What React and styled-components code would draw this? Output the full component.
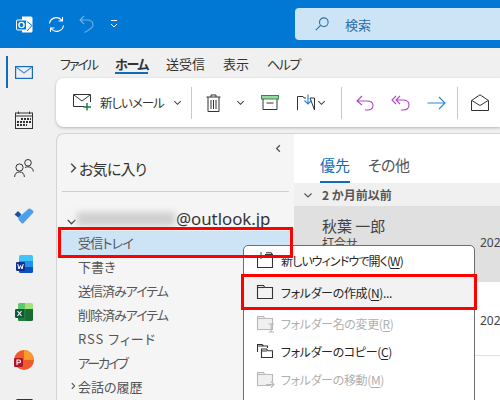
import React from 'react';
import styled, { createGlobalStyle } from 'styled-components';

const Global = createGlobalStyle`
  html, body { margin: 0; padding: 0; }
  body {
    width: 500px;
    height: 400px;
    overflow: hidden;
    font-family: "Noto Sans CJK JP", "Noto Sans", sans-serif;
    font-feature-settings: "palt";
    color: #333;
  }
`;

const Page = styled.div`
  position: relative;
  width: 500px;
  height: 400px;
  overflow: hidden;
  background: #f0f0f0;
  display: flex;
  flex-direction: column;
`;

const TitleBar = styled.div`
  height: 48px;
  flex: none;
  background: #0078d4;
  display: flex;
  align-items: center;
  padding-left: 16px;
`;

const TitleIcon = styled.div`
  display: flex;
  margin-right: ${props => props.gap}px;
`;

const SearchBox = styled.div`
  margin-left: auto;
  width: 205px;
  height: 32px;
  background: #cce4f6;
  border-radius: 4px 0 0 4px;
  display: flex;
  align-items: center;
  padding-left: 20px;
  box-sizing: border-box;
  gap: 16px;
  color: #2a6ea8;
  font-size: 13px;
`;

const Body = styled.div`
  flex: 1;
  display: flex;
  min-height: 0;
`;

const Rail = styled.div`
  width: 56px;
  flex: none;
  display: flex;
  flex-direction: column;
`;

const RailItem = styled.div`
  position: relative;
  width: 48px;
  height: 48px;
  flex: none;
  display: flex;
  align-items: center;
  justify-content: center;

  ${props => props.active && `
    &::before {
      content: '';
      position: absolute;
      left: 6px;
      top: 8px;
      width: 2px;
      height: 32px;
      background: #0f6cbd;
    }
  `}
`;

const Main = styled.div`
  flex: 1;
  min-width: 0;
  display: flex;
  flex-direction: column;
`;

const MenuBar = styled.div`
  height: 30px;
  flex: none;
  display: flex;
  align-items: center;
  padding: 0 0 0 4px;
  box-sizing: border-box;
  gap: 18px;
  font-size: 13px;
`;

const MenuTab = styled.div`
  position: relative;
  color: #333;
  line-height: 17px;
  letter-spacing: ${props => props.spacing || 0}px;
  font-weight: ${props => props.active ? 700 : 400};

  ${props => props.active && `
    &::after {
      content: '';
      position: absolute;
      left: 0;
      right: 0;
      bottom: -2px;
      height: 2px;
      background: #0f6cbd;
    }
  `}
`;

const Ribbon = styled.div`
  height: 49px;
  flex: none;
  background: #fff;
  border-radius: 8px 0 0 8px;
  box-shadow: 0 1px 3px rgba(0, 0, 0, 0.25);
  display: flex;
  align-items: center;
  padding-left: 17px;
  box-sizing: border-box;
`;

const RibbonLabel = styled.span`
  font-size: 12.5px;
  letter-spacing: -1px;
  color: #333;
  width: 73px;
  margin-left: 8px;
  white-space: nowrap;
`;

const RibbonIcon = styled.div`
  display: flex;
  flex: none;
  margin-left: ${props => props.left || 0}px;
`;

const Divider = styled.div`
  width: 1px;
  height: 32px;
  flex: none;
  background: #c8c8c8;
  margin-left: ${props => props.left || 0}px;
`;

const Panes = styled.div`
  flex: 1;
  display: flex;
  margin-top: 6px;
  min-height: 0;
`;

const FolderPane = styled.div`
  position: relative;
  width: 238px;
  flex: none;
  background: #f5f5f5;
  border: 1px solid #d4d4d4;
  border-right: none;
  border-bottom: none;
  border-radius: 8px 0 0 0;
  box-sizing: border-box;
  padding: 0 4px;
`;

const CollapseBtn = styled.div`
  position: absolute;
  right: 11px;
  top: 10px;
  display: flex;
`;

const Favorites = styled.div`
  height: 58px;
  margin: 0 1px;
  box-sizing: border-box;
  border-bottom: 1px solid #d0d0d0;
  display: flex;
  align-items: center;
  padding: 11px 0 0 5px;
  font-size: 15px;
  letter-spacing: -0.8px;
`;

const Account = styled.div`
  height: 39px;
  display: flex;
  align-items: flex-end;
  padding: 0 0 1px 5px;
  box-sizing: border-box;
  font-size: 16.8px;
  line-height: 22px;
  color: #333;
  font-family: "Noto Sans", sans-serif;
`;

const AccountArrow = styled.span`
  display: flex;
  margin-bottom: 3px;
`;

const Blurred = styled.div`
  width: 98px;
  height: 14px;
  margin: 0 1px 4px 0;
  background: #cfcfcf;
  filter: blur(3px);
`;

const FolderRow = styled.div`
  height: 24px;
  box-sizing: border-box;
  display: flex;
  align-items: center;
  padding-left: ${props => props.arrow ? '8px' : '17px'};
  padding-bottom: 2px;
  gap: 1px;
  font-size: 13px;
  letter-spacing: ${props => props.spacing || 0}px;
  color: #555;
  background: ${props => props.selected ? '#cce4f6' : 'transparent'};
`;

const MessagePane = styled.div`
  flex: 1;
  min-width: 0;
  background: #fff;
  border-top: 1px solid #d4d4d4;
  display: flex;
  flex-direction: column;
`;

const Tabs = styled.div`
  height: 49px;
  flex: none;
  display: flex;
  align-items: flex-end;
  gap: 18px;
  padding-left: 26px;
  font-size: 15px;
  box-sizing: border-box;
`;

const Tab = styled.div`
  height: 32px;
  line-height: 28px;
  box-sizing: border-box;
  letter-spacing: ${props => props.spacing || 0}px;
  color: ${props => props.active ? '#0f6cbd' : '#555'};
  border-bottom: ${props => props.active ? '2px solid #0f6cbd' : 'none'};
`;

const GroupHeader = styled.div`
  height: 23px;
  flex: none;
  background: #f0f0f0;
  display: flex;
  align-items: center;
  gap: 9px;
  padding-left: 9px;
  font-size: 12px;
  font-weight: 700;
  color: #555;
`;

const Message = styled.div`
  position: relative;
  height: ${props => props.height}px;
  flex: none;
  box-sizing: border-box;
  background: ${props => props.selected ? '#e0e0e0' : '#fff'};
  border-bottom: ${props => props.selected ? 'none' : '1px solid #e0e0e0'};
  padding: 10px 0 0 28px;
  color: #444;
`;

const Sender = styled.div`
  font-size: 15px;
  line-height: 20px;
`;

const Subject = styled.div`
  font-size: 12px;
  line-height: 14px;
`;

const MessageDate = styled.div`
  position: absolute;
  left: 186px;
  top: ${props => props.top}px;
  font-size: 12px;
  line-height: 16px;
  font-family: "Noto Sans", sans-serif;
`;

const ContextMenu = styled.div`
  position: absolute;
  left: 243px;
  top: 245px;
  width: 232px;
  height: 180px;
  box-sizing: border-box;
  background: #fff;
  border: 1px solid #6e6e6e;
  border-radius: 5px;
  display: flex;
  flex-direction: column;
`;

const MenuItem = styled.div`
  height: ${props => props.height || 28}px;
  flex: none;
  margin-top: ${props => props.top || 0}px;
  display: flex;
  align-items: center;
  gap: 8px;
  padding-left: 13px;
  font-size: 12px;
  letter-spacing: ${props => props.spacing ?? -0.35}px;
  color: ${props => props.disabled ? '#b0b0b0' : '#262626'};
  background: ${props => props.hot ? '#f2f2f2' : 'transparent'};
  white-space: nowrap;

  u { text-underline-offset: 2px; }
`;

const Highlight = styled.div`
  position: absolute;
  left: ${props => props.x}px;
  top: ${props => props.y}px;
  width: ${props => props.w}px;
  height: ${props => props.h}px;
  box-sizing: border-box;
  border: 3px solid #f00;
  pointer-events: none;
`;

const Chevron = ({ dir = 'right', size = 10, color = '#444', width = 1.2 }) => {
  const d = {
    right: 'M3.5 1.5 L7 5 L3.5 8.5',
    left: 'M6.5 1.5 L3 5 L6.5 8.5',
    down: 'M1.5 3.5 L5 7 L8.5 3.5',
  }[dir];
  return (
    <svg width={size} height={size} viewBox="0 0 10 10" fill="none" stroke={color} strokeWidth={width}>
      <path d={d} />
    </svg>
  );
};

const MailIcon = () => (
  <svg width="18" height="13" viewBox="0 0 18 13" fill="none">
    <rect x="0.6" y="0.6" width="16.8" height="11.8" stroke="#1a6bb5" strokeWidth="1.2" />
    <path d="M1 1 L9 7 L17 1" stroke="#4a94d4" strokeWidth="1.2" />
  </svg>
);

const CalendarIcon = () => (
  <svg width="18" height="18" viewBox="0 0 18 18" fill="none" stroke="#333" strokeWidth="1">
    <rect x="0.5" y="2" width="17" height="15.5" />
    <path d="M0.5 5 H17.5 M3.5 0.5 V3 M14.5 0.5 V3" />
    <path d="M6 8 H16 M2 11 H16 M2 14 H12" strokeWidth="2" strokeDasharray="2 1" />
  </svg>
);

const PeopleIcon = () => (
  <svg width="20" height="18" viewBox="0 0 20 18" fill="none" stroke="#333" strokeWidth="1">
    <circle cx="5.5" cy="8.5" r="3.6" />
    <path d="M0.6 18 C0.8 14.5 2.5 13 5.5 13 C8.5 13 10.2 14.5 10.4 18" />
    <circle cx="14" cy="3.8" r="3.3" />
    <path d="M11 8.5 C12 8 13 7.8 14 7.8 C17 7.8 19 9.5 19.4 12.5" />
  </svg>
);

const TodoIcon = () => (
  <svg width="20" height="16" viewBox="0 0 20 16">
    <path d="M0.5 6.5 L3.5 3.5 Q4 3 4.5 3.5 L7.5 6.5 L4.5 9.8 Z" fill="#1b4fa8" />
    <path d="M4.5 9.8 L14.5 0.8 Q15.5 0 16.5 0.8 L19.3 3 Q20 3.8 19.2 4.8 L9.6 15 Q8.5 16 7.4 15 L4.5 11.5 Z" fill="#4aa0ec" />
  </svg>
);

const WordIcon = () => (
  <svg width="17" height="18" viewBox="0 0 17 18">
    <path d="M4.5 0 H15.5 Q17 0 17 1.5 V6 H3 V1.5 Q3 0 4.5 0 Z" fill="#41c4f7" />
    <rect x="3" y="6" width="14" height="6" fill="#2590e6" />
    <path d="M3 12 H17 V16.5 Q17 18 15.5 18 H4.5 Q3 18 3 16.5 Z" fill="#0f50c4" />
    <rect x="0" y="7" width="9" height="9" rx="1.2" fill="#10318c" />
    <path d="M1.8 9 L3 14 L4.5 10.5 L6 14 L7.2 9" stroke="#fff" strokeWidth="1" fill="none" />
  </svg>
);

const ExcelIcon = () => (
  <svg width="18" height="18" viewBox="0 0 18 18">
    <path d="M4.5 0 H10.5 V6 H3 V1.5 Q3 0 4.5 0 Z" fill="#5cc96f" />
    <path d="M10.5 0 H16.5 Q18 0 18 1.5 V6 H10.5 Z" fill="#a8e07a" />
    <rect x="3" y="6" width="8" height="12" rx="1" fill="#21803f" />
    <path d="M10.5 6 H18 V16.5 Q18 18 16.5 18 H10.5 Z" fill="#1a6b32" />
    <rect x="0" y="6" width="9" height="9" rx="1.2" fill="#0d5a3b" />
    <path d="M2.5 8 L6.5 13 M6.5 8 L2.5 13" stroke="#fff" strokeWidth="1.1" />
  </svg>
);

const PowerPointIcon = () => (
  <svg width="20" height="20" viewBox="0 0 20 20">
    <circle cx="10" cy="10" r="10" fill="#ef5a2c" />
    <path d="M10 0 A10 10 0 0 1 20 10 L10 10 Z" fill="#fb9a2a" />
    <rect x="0" y="8" width="9" height="9" rx="1.2" fill="#b5132b" />
    <path d="M3 15 V10 H5 Q6.5 10 6.5 11.4 Q6.5 12.8 5 12.8 H3" stroke="#fff" strokeWidth="1.1" fill="none" />
  </svg>
);

const NextAppIcon = () => (
  <svg width="17" height="18" viewBox="0 0 17 18">
    <rect width="17" height="18" rx="1.5" fill="#333" />
  </svg>
);

const FolderIcon = ({ color = '#333', children, fill = 'none' }) => (
  <svg width="16" height="14" viewBox="0 0 16 14" fill={fill} stroke={color} strokeWidth="1.1" overflow="visible">
    <path d="M0.5 13.5 V0.5 H6.5 L8 2.5 H15.5 V13.5 Z" />
    <path d="M0.5 2.5 H7.5" />
    {children}
  </svg>
);

export default function App() {
  return (
    <Page>
      <Global />
      <TitleBar>
        <TitleIcon gap={15}>
          <svg width="17" height="17" viewBox="0 0 17 17">
            <path d="M6 0.5 H15 Q16.5 0.5 16.5 2 V15 Q16.5 16.5 15 16.5 H6 V13 H1 V4 H6 Z" fill="#fff" />
            <rect x="0.5" y="4" width="10" height="10" rx="1" fill="#0078d4" stroke="#fff" strokeWidth="1" />
            <circle cx="5.5" cy="9" r="2.6" fill="none" stroke="#fff" strokeWidth="1.4" />
            <path d="M11 5.5 L16 9.5 M11 15 L16 9.5" stroke="#0078d4" strokeWidth="1" />
          </svg>
        </TitleIcon>
        <TitleIcon gap={14}>
          <svg width="17" height="17" viewBox="0 0 17 17" fill="none" stroke="#fff" strokeWidth="1.1">
            <path d="M1.5 7.5 A7 7 0 0 1 14 4.5 M14.5 1 V5 H10.5" />
            <path d="M15.5 9.5 A7 7 0 0 1 3 12.5 M2.5 16 V12 H6.5" />
          </svg>
        </TitleIcon>
        <TitleIcon gap={16}>
          <svg width="15" height="18" viewBox="0 0 15 18" fill="none" stroke="#6fb0e6" strokeWidth="1.1">
            <path d="M5 1 L1 5 L5 9 M1 5 H8 Q14 5 14 10 Q14 13 5.5 17.5" />
          </svg>
        </TitleIcon>
        <TitleIcon gap={0}>
          <svg width="8" height="10" viewBox="0 0 8 10" fill="none" stroke="#fff" strokeWidth="1">
            <path d="M1 1.5 H7 M1 5 L4 8 L7 5" />
          </svg>
        </TitleIcon>
        <SearchBox>
          <svg width="14" height="14" viewBox="0 0 14 14" fill="none" stroke="#2a6ea8" strokeWidth="1.1">
            <circle cx="8.8" cy="5.2" r="4.3" />
            <path d="M5.6 8.4 L0.8 13.2" />
          </svg>
          検索
        </SearchBox>
      </TitleBar>
      <Body>
        <Rail>
          <RailItem active><MailIcon /></RailItem>
          <RailItem><CalendarIcon /></RailItem>
          <RailItem><PeopleIcon /></RailItem>
          <RailItem><TodoIcon /></RailItem>
          <RailItem><WordIcon /></RailItem>
          <RailItem><ExcelIcon /></RailItem>
          <RailItem><PowerPointIcon /></RailItem>
          <RailItem><NextAppIcon /></RailItem>
        </Rail>
        <Main>
          <MenuBar>
            <MenuTab spacing={-2}>ファイル</MenuTab>
            <MenuTab active spacing={-1.4}>ホーム</MenuTab>
            <MenuTab>送受信</MenuTab>
            <MenuTab>表示</MenuTab>
            <MenuTab spacing={-1.4}>ヘルプ</MenuTab>
          </MenuBar>
          <Ribbon>
            <svg width="19" height="17" viewBox="0 0 19 17" fill="none" stroke="#333" strokeWidth="1">
              <path d="M11 12.5 H0.5 V0.5 H17.5 V8" />
              <path d="M1 1 L9 7 L17 1" />
              <path d="M14 9 V16.5 M10.5 13 H18" stroke="#107c41" strokeWidth="1.4" />
            </svg>
            <RibbonLabel>新しいメール</RibbonLabel>
            <Chevron dir="down" size={9} />
            <Divider left={9} />
            <RibbonIcon left={14}>
              <svg width="15" height="18" viewBox="0 0 15 18" fill="none" stroke="#333" strokeWidth="1">
                <path d="M0.5 3 H14.5 M5 3 V1 H10 V3 M2 3 V17.5 H13 V3 M5 6 V15 M7.5 6 V15 M10 6 V15" />
              </svg>
            </RibbonIcon>
            <RibbonIcon left={15}><Chevron dir="down" size={9} /></RibbonIcon>
            <RibbonIcon left={16}>
              <svg width="18" height="15" viewBox="0 0 18 15" fill="none" stroke="#333" strokeWidth="1">
                <rect x="0.5" y="0.5" width="17" height="3.5" fill="#9ed5a5" stroke="#2f8a4a" />
                <path d="M2 4 V14.5 H16 V4 M5.5 8 H12.5" />
              </svg>
            </RibbonIcon>
            <RibbonIcon left={18}>
              <svg width="18" height="17" viewBox="0 0 18 17" fill="none" stroke="#333" strokeWidth="1">
                <path d="M0.5 16 V2.5 H6 L7 4 H9 M13 4 H17.5 V16 Z" />
                <path d="M11 0.5 V10 M7.5 6.5 L11 10 L14.5 6.5" stroke="#2b88d8" strokeWidth="1.2" />
              </svg>
            </RibbonIcon>
            <RibbonIcon left={2}><Chevron dir="down" size={9} /></RibbonIcon>
            <Divider left={15} />
            <RibbonIcon left={14}>
              <svg width="18" height="16" viewBox="0 0 18 16" fill="none" stroke="#b146c2" strokeWidth="1.1">
                <path d="M6 1 L1 6 L6 10 M1 6 H11 Q17 6 17 10.5 Q17 15 11 15 H9" />
              </svg>
            </RibbonIcon>
            <RibbonIcon left={17}>
              <svg width="19" height="16" viewBox="0 0 19 16" fill="none" stroke="#b146c2" strokeWidth="1.1">
                <path d="M5 1 L1 5 L5 9 M9 1 L5 5 L9 9 M5 5 H12 Q18 5 18 10 Q18 15 12 15 H10" />
              </svg>
            </RibbonIcon>
            <RibbonIcon left={17}>
              <svg width="19" height="14" viewBox="0 0 19 14" fill="none" stroke="#2b88d8" strokeWidth="1.1">
                <path d="M0.5 7 H18 M12 1 L18 7 L12 13" />
              </svg>
            </RibbonIcon>
            <Divider left={11} />
            <RibbonIcon left={13}>
              <svg width="18" height="17" viewBox="0 0 18 17" fill="none" stroke="#333" strokeWidth="1">
                <path d="M0.5 6.5 L9 0.8 L17.5 6.5 V16.5 H0.5 Z M0.8 6.5 L9 11.5 L17.2 6.5" />
              </svg>
            </RibbonIcon>
          </Ribbon>
          <Panes>
            <FolderPane>
              <CollapseBtn><Chevron dir="left" size={9} color="#555" width={1.5} /></CollapseBtn>
              <Favorites><Chevron size={12} width={1.2} />お気に入り</Favorites>
              <Account>
                <AccountArrow><Chevron dir="down" size={11} /></AccountArrow>
                <Blurred />
                @outlook.jp
              </Account>
              <FolderRow selected spacing={-0.8}>受信トレイ</FolderRow>
              <FolderRow>下書き</FolderRow>
              <FolderRow spacing={-1}>送信済みアイテム</FolderRow>
              <FolderRow spacing={-1}>削除済みアイテム</FolderRow>
              <FolderRow spacing={1}>RSS フィード</FolderRow>
              <FolderRow spacing={-2}>アーカイブ</FolderRow>
              <FolderRow arrow><Chevron size={8} width={1.3} />会話の履歴</FolderRow>
            </FolderPane>
            <MessagePane>
              <Tabs>
                <Tab active>優先</Tab>
                <Tab spacing={-0.5}>その他</Tab>
              </Tabs>
              <GroupHeader><Chevron dir="down" size={10} color="#555" />2 か月前以前</GroupHeader>
              <Message selected height={76}>
                <Sender>秋葉 一郎</Sender>
                <Subject>打合せ</Subject>
                <MessageDate top={29}>202</MessageDate>
              </Message>
              <Message height={74}>
                <MessageDate top={31}>202</MessageDate>
              </Message>
            </MessagePane>
          </Panes>
        </Main>
      </Body>
      <ContextMenu>
        <MenuItem spacing={-0.9}>
          <svg width="16" height="16" viewBox="0 0 16 16" fill="none" stroke="#333" strokeWidth="1.1">
            <path d="M0.5 6 V15.5 H15.5 V2.5 H8 M9 0.8 H14 L15.5 2.5" />
            <path d="M4 0 V7 M0.5 3.5 H7.5" stroke="#107c41" />
          </svg>
          <span>新しいウィンドウで開く(<u>W</u>)</span>
        </MenuItem>
        <MenuItem hot height={32} top={2}>
          <FolderIcon />
          <span>フォルダーの作成(<u>N</u>)...</span>
        </MenuItem>
        <MenuItem disabled top={1}>
          <FolderIcon color="#b8b8b8" fill="#f0f0f0"><path d="M11.5 8 H17 M14.2 8 V16 M11.5 16 H17" /></FolderIcon>
          <span>フォルダー名の変更(<u>R</u>)</span>
        </MenuItem>
        <MenuItem>
          <svg width="16" height="14" viewBox="0 0 16 14" fill="none" stroke="#333" strokeWidth="1.1">
            <path d="M0.5 8 V0.5 H5 L6.5 2 H10.5 V4 M0.5 2 H6" />
            <path d="M4.5 13.5 V5 H9.5 L11 6.8 H15.5 V13.5 Z M4.5 7 H10" />
          </svg>
          <span>フォルダーのコピー(<u>C</u>)</span>
        </MenuItem>
        <MenuItem disabled>
          <FolderIcon color="#b8b8b8" fill="#f0f0f0"><path d="M9 12.5 H17 M14 9.5 L17 12.5 L14 15.5" /></FolderIcon>
          <span>フォルダーの移動(<u>M</u>)</span>
        </MenuItem>
        <MenuItem disabled><FolderIcon color="#b8b8b8" fill="#f0f0f0" /></MenuItem>
      </ContextMenu>
      <Highlight x={58} y={227} w={235} h={31} />
      <Highlight x={241} y={274} w={236} h={36} />
    </Page>
  );
}
